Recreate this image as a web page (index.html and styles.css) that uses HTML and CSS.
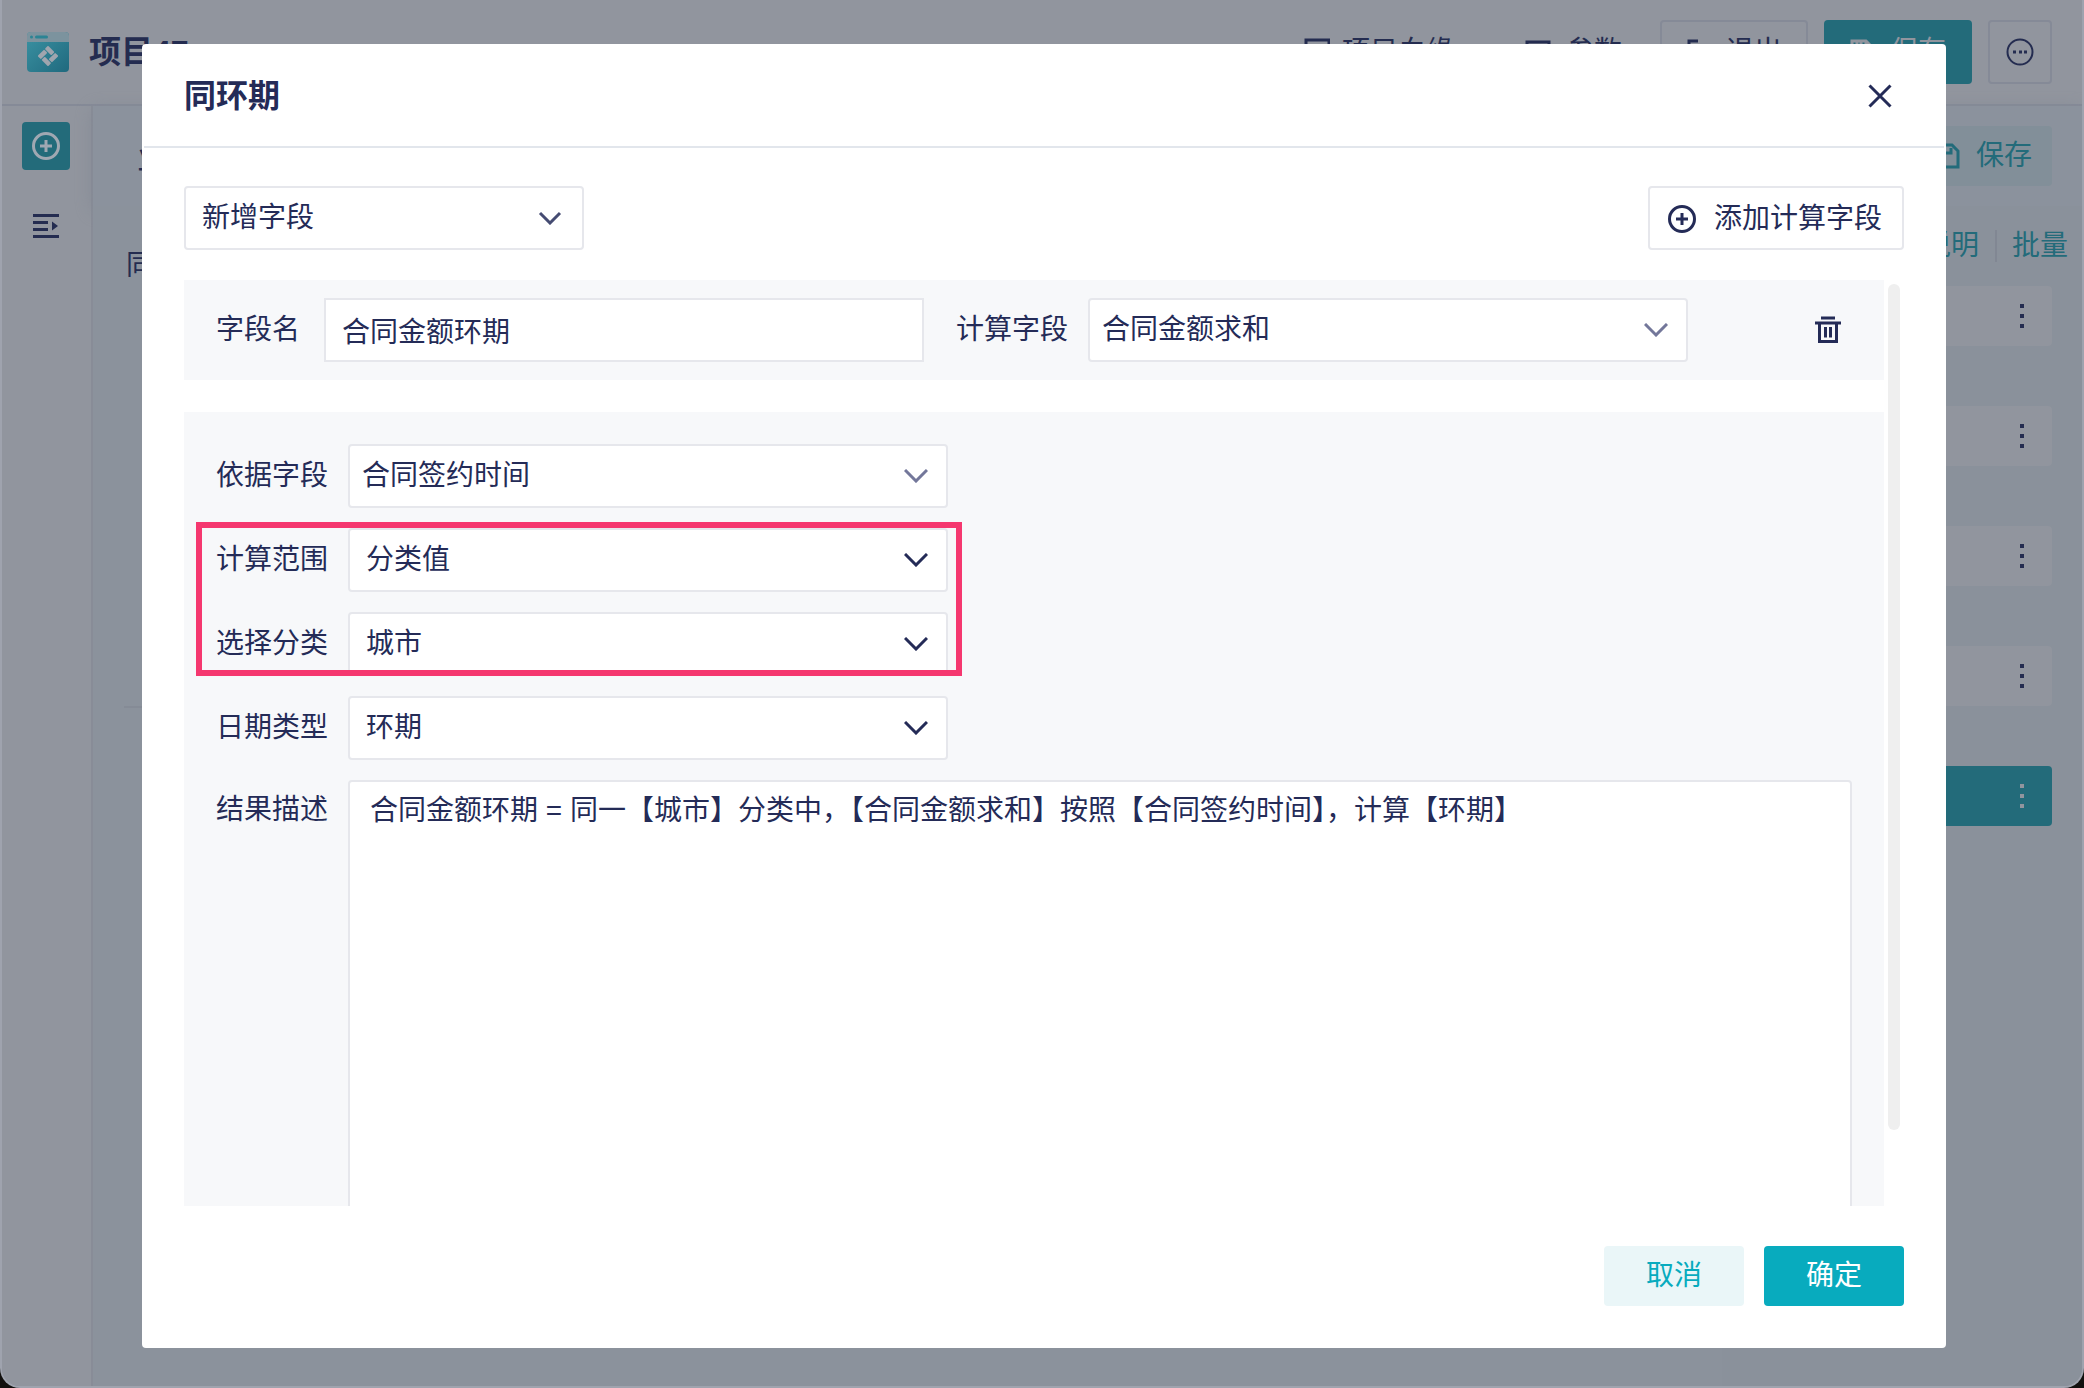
FILE: index.html
```html
<!DOCTYPE html>
<html lang="zh-CN">
<head>
<meta charset="utf-8">
<title>同环期</title>
<link rel="stylesheet" href="styles.css">
</head>
<body>
<div class="app">
  <header class="topbar">
    <svg class="logo" width="42" height="40" viewBox="0 0 42 40">
      <defs><linearGradient id="lg" x1="0" y1="0" x2="1" y2="1"><stop offset="0" stop-color="#3b93a3"/><stop offset="1" stop-color="#20697e"/></linearGradient></defs>
      <rect width="42" height="40" rx="4" fill="url(#lg)"/>
      <path d="M0 10V4a4 4 0 0 1 4-4h34a4 4 0 0 1 4 4v6z" fill="#7c939e"/>
      <circle cx="4.500" cy="5" r="1.500" fill="#2b8494"/><rect x="8" y="3.500" width="13" height="3" rx="1.500" fill="#2b8494"/>
      <g fill="#a0a5ae" transform="translate(21 24) rotate(45) scale(.92)"><rect x="-8" y="-8" width="10" height="5" rx="1"/><rect x="3" y="-8" width="5" height="10" rx="1"/><rect x="-2" y="3" width="10" height="5" rx="1"/><rect x="-8" y="-2" width="5" height="10" rx="1"/></g>
    </svg>
    <h1 class="project">项目47</h1>
    <nav class="actions">
      <a class="toplink wide" href="#"><svg width="28" height="28" viewBox="0 0 28 28"><path d="M4 2h23v24H4z M9 9h13 M9 15h13"/></svg>项目血缘</a>
      <a class="toplink" href="#"><svg width="28" height="28" viewBox="0 0 28 28"><path d="M3 4h22v20H3z M8 11h12 M8 17h12"/></svg>参数</a>
      <button class="btn outline"><svg width="24" height="28" viewBox="0 0 24 28"><path d="M12 3H3v22h9 M9 14h14 M18 9l5 5-5 5"/></svg>退出</button>
      <button class="btn solid"><svg width="24" height="28" viewBox="0 0 24 28"><path d="M2 3h14l6 6v16H2z M7 3v7h9V3 M11 3v5"/></svg>保存</button>
      <button class="btn outline more" aria-label="更多"><svg width="28" height="28" viewBox="0 0 28 28"><circle cx="14" cy="14" r="12.500"/><path d="M7 14h3 M13 14h3 M18 14h3" stroke-width="3"/></svg></button>
    </nav>
  </header>
  <div class="workspace">
    <aside class="rail">
      <button class="rail-btn active" aria-label="添加"><svg width="28" height="28" viewBox="0 0 28 28"><circle cx="14" cy="14" r="12.500"/><path d="M14 8v12 M8 14h12"/></svg></button>
      <button class="rail-btn" aria-label="展开"><svg width="28" height="24" viewBox="0 0 28 24"><path d="M1 1.500h26 M1 8.500h15 M1 15.500h15 M1 22.500h26"/><path d="M20 7.500v9l6-4.500z" fill="currentColor" stroke="none"/></svg></button>
    </aside>
    <main class="main">
      <div class="toolbar">
        <h2 class="tool-title">业务包</h2>
        <button class="btn soft"><svg width="24" height="28" viewBox="0 0 24 28"><path d="M2 3h14l6 6v16H2z M7 3v8h8V6"/></svg>保存</button>
      </div>
      <div class="content">
        <section class="canvas"><h3 class="canvas-title">同环期</h3></section>
        <section class="steps">
          <div class="step-links"><a href="#">说明</a><a href="#">批量</a></div>
          <ul class="step-list">
            <li></li><li></li><li></li><li></li><li class="current"></li>
          </ul>
        </section>
      </div>
    </main>
  </div>
</div>

<div class="overlay">
  <form class="modal" role="dialog" aria-labelledby="dlg-title">
    <div class="modal-head">
      <h2 id="dlg-title">同环期</h2>
      <button type="button" class="close" aria-label="关闭"><svg width="24" height="24" viewBox="0 0 24 24"><path d="M1.500 1.500l21 21 M22.500 1.500l-21 21"/></svg></button>
    </div>
    <div class="modal-body">
      <div class="bar">
        <div class="select short"><select aria-label="字段方式"><option>新增字段</option></select><svg class="chev" width="24" height="14" viewBox="0 0 24 14"><path d="M2 2l10 10 10-10"/></svg></div>
        <button type="button" class="add"><svg width="28" height="28" viewBox="0 0 28 28"><circle cx="14" cy="14" r="12.500"/><path d="M14 8v12 M8 14h12"/></svg>添加计算字段</button>
      </div>
      <div class="scroller">
        <div class="panels">
          <section class="panel fields">
            <label for="name">字段名</label>
            <input id="name" class="name" type="text" value="合同金额环期">
            <label class="second" for="calc">计算字段</label>
            <div class="select pale"><select id="calc"><option>合同金额求和</option></select><svg class="chev" width="24" height="14" viewBox="0 0 24 14"><path d="M1 1l11 11 11-11"/></svg></div>
            <button type="button" class="trash" aria-label="删除"><svg width="26" height="28" viewBox="0 0 26 28"><path d="M6 2h14 M0 7h26 M4.500 7v18.500h17V7 M10.500 11v10.500 M15.500 11v10.500"/></svg></button>
          </section>
          <section class="panel rows">
            <div class="row"><label for="by">依据字段</label><div class="select pale"><select id="by"><option>合同签约时间</option></select><svg class="chev" width="24" height="14" viewBox="0 0 24 14"><path d="M1 1l11 11 11-11"/></svg></div></div>
            <div class="marked">
              <div class="row"><label for="range">计算范围</label><div class="select"><select id="range"><option>分类值</option></select><svg class="chev" width="24" height="14" viewBox="0 0 24 14"><path d="M1 1l11 11 11-11"/></svg></div></div>
              <div class="row"><label for="cat">选择分类</label><div class="select"><select id="cat"><option>城市</option></select><svg class="chev" width="24" height="14" viewBox="0 0 24 14"><path d="M1 1l11 11 11-11"/></svg></div></div>
            </div>
            <div class="row"><label for="type">日期类型</label><div class="select"><select id="type"><option>环期</option></select><svg class="chev" width="24" height="14" viewBox="0 0 24 14"><path d="M1 1l11 11 11-11"/></svg></div></div>
            <div class="row top"><label for="desc">结果描述</label><textarea id="desc" readonly>合同金额环期 = 同一【城市】分类中，【合同金额求和】按照【合同签约时间】，计算【环期】</textarea></div>
          </section>
        </div>
        <div class="track"><div class="thumb"></div></div>
      </div>
      <div class="foot">
        <button type="button" class="cancel">取消</button>
        <button type="submit" class="ok">确定</button>
      </div>
    </div>
  </form>
</div>
</body>
</html>
```
FILE: styles.css
```css
:root {
  --ink: #242b57;
  --dim-ink: #242c50;
  --dim-line: #858a97;
  --dim-white: #91959e;
  --dim-page: #8a919b;
  --dim-teal: #236b7a;
  --teal: #08abbe;
  --line: #e6e7ec;
}

* { box-sizing: border-box; }

body {
  margin: 0;
  background: #12100e;
  color: var(--ink);
  font-family: "Liberation Sans", "Noto Sans CJK SC", sans-serif;
  font-size: 28px;
  line-height: 42px;
}

h1, h2, h3 { margin: 0; font-size: 32px; font-weight: 500; line-height: 48px; }
a { color: inherit; text-decoration: none; }
button, input, select, textarea { font: inherit; color: inherit; margin: 0; }
button { display: flex; align-items: center; justify-content: center; padding: 0; border: 0; border-radius: 4px; background: none; cursor: pointer; }
svg { display: block; flex: none; fill: none; stroke: currentColor; stroke-width: 3px; }
.logo { stroke: none; }

/* page behind the dialog */
.app {
  display: flex;
  flex-direction: column;
  height: 100vh;
  overflow: hidden;
  border: 2px solid #9fa3ae;
  border-top: 0;
  border-radius: 0 0 20px 20px;
  background: var(--dim-page);
  color: var(--dim-ink);
}

.topbar {
  display: flex;
  align-items: center;
  flex: none;
  height: 106px;
  padding: 0 30px 0 25px;
  border-bottom: 2px solid var(--dim-line);
  background: var(--dim-white);
}
.project { margin-left: 20px; font-weight: 700; }
.actions { display: flex; align-items: center; gap: 16px; margin-left: auto; }
.toplink { display: flex; align-items: center; gap: 14px; margin-right: 22px; }
.toplink.wide { gap: 12px; margin-right: 54px; }

.btn { width: 148px; height: 64px; gap: 16px; }
.outline { border: 2px solid var(--dim-line); }
.solid { background: var(--dim-teal); color: var(--dim-white); }
.more { width: 64px; }
.more svg { stroke-width: 2px; }
.soft { height: 60px; padding-left: 12px; background: #828f99; color: var(--dim-teal); }

.workspace { display: flex; flex: 1; min-height: 0; }
.rail {
  display: flex;
  flex-direction: column;
  gap: 32px;
  flex: none;
  width: 91px;
  padding: 16px 20px;
  border-right: 2px solid #888c97;
  background: var(--dim-white);
}
.rail-btn { width: 48px; height: 48px; }
.rail-btn.active { background: var(--dim-teal); color: #a0a8b2; }

.main { display: flex; flex-direction: column; flex: 1; min-width: 0; }
.toolbar {
  display: flex;
  align-items: center;
  justify-content: space-between;
  flex: none;
  height: 100px;
  padding: 0 30px 0 44px;
  background: #8b929d;
  box-shadow: 0 4px 16px #848a95;
}
.tool-title { padding-top: 4px; font-weight: 400; }
.content { display: flex; flex: 1; min-height: 0; }
.canvas { flex: 1; padding: 36px 31px; background: #8b929c; }
.canvas-title { height: 466px; border-bottom: 2px solid #858b96; font-size: 28px; font-weight: 400; text-indent: 2px; }

.steps { flex: none; width: 360px; background: var(--dim-page); }
.step-links { display: flex; align-items: center; justify-content: flex-end; height: 80px; padding-right: 14px; color: var(--dim-teal); }
.step-links a + a { margin-left: 16px; padding-left: 15px; border-left: 2px solid #818793; line-height: 32px; }
.step-list { display: flex; flex-direction: column; gap: 60px; margin: 0; padding: 0 30px; list-style: none; }
.step-list li { display: flex; align-items: center; justify-content: flex-end; height: 60px; padding-right: 28px; border-radius: 4px; background: var(--dim-white); }
.step-list li::after { content: ""; width: 4px; height: 24px; background: repeating-linear-gradient(var(--dim-ink) 0 4px, transparent 4px 10px); }
.step-list .current { background: var(--dim-teal); }
.step-list .current::after { background: repeating-linear-gradient(var(--dim-white) 0 4px, transparent 4px 10px); }

/* dialog */
.overlay { position: fixed; inset: 0; display: flex; padding: 44px 138px 40px 142px; }
.modal { display: flex; flex-direction: column; flex: 1; min-width: 0; border-radius: 4px; background: #fff; }
.modal-head {
  display: flex;
  align-items: center;
  justify-content: space-between;
  flex: none;
  height: 104px;
  margin: 0 2px;
  padding: 2px 52px 0 40px;
  border-bottom: 2px solid #e2e6ec;
}
.modal-head h2 { font-weight: 700; }
.modal-body { display: flex; flex-direction: column; flex: 1; min-height: 0; padding: 38px 42px 42px; }
.bar { display: flex; justify-content: space-between; flex: none; margin-bottom: 30px; }

.select { position: relative; width: 600px; height: 64px; }
.select.short { width: 400px; }
.select select, .name {
  width: 100%;
  height: 64px;
  padding: 0 16px;
  border: 2px solid var(--line);
  border-radius: 4px;
  outline: 0;
  appearance: none;
  background: #fff;
}
.select.pale select { padding: 0 12px; }
.chev { position: absolute; top: 25px; right: 20px; pointer-events: none; }
.short .chev { right: 22px; color: #454b72; }
.pale .chev { color: #73779a; }
.add { width: 256px; height: 64px; padding: 2px 2px 0 0; gap: 18px; border: 2px solid var(--line); }

.scroller { display: flex; flex: 1; min-height: 0; }
.panels { flex: 1; min-width: 0; overflow: hidden; }
.panel { padding: 32px; background: #f7f8fa; }
.fields { display: flex; align-items: center; height: 100px; margin-bottom: 32px; }
.name { width: 600px; margin-left: 24px; border-radius: 0; }
.second { margin: 0 20px 0 32px; }
.trash { margin-left: auto; margin-right: 11px; }
.rows { display: flex; flex-direction: column; gap: 20px; }
.row { display: flex; align-items: center; gap: 20px; }
.row.top { align-items: flex-start; }
.row.top label { line-height: 60px; }
.marked { position: relative; display: flex; flex-direction: column; gap: 20px; width: fit-content; }
.marked::after { content: ""; position: absolute; inset: -6px -14px 0 -20px; border: 6px solid #f5376f; pointer-events: none; }
textarea { flex: 1; height: 600px; padding: 8px 20px; border: 2px solid var(--line); border-radius: 4px; outline: 0; resize: none; background: #fff; }

.track { flex: none; width: 20px; padding: 4px 4px 76px; }
.thumb { height: 100%; border-radius: 6px; background: #efefef; }

.foot { display: flex; justify-content: flex-end; flex: none; gap: 20px; margin-top: 40px; }
.cancel, .ok { width: 140px; height: 60px; }
.cancel { background: #eaf6f8; color: var(--teal); }
.ok { background: var(--teal); color: #fff; }
```
